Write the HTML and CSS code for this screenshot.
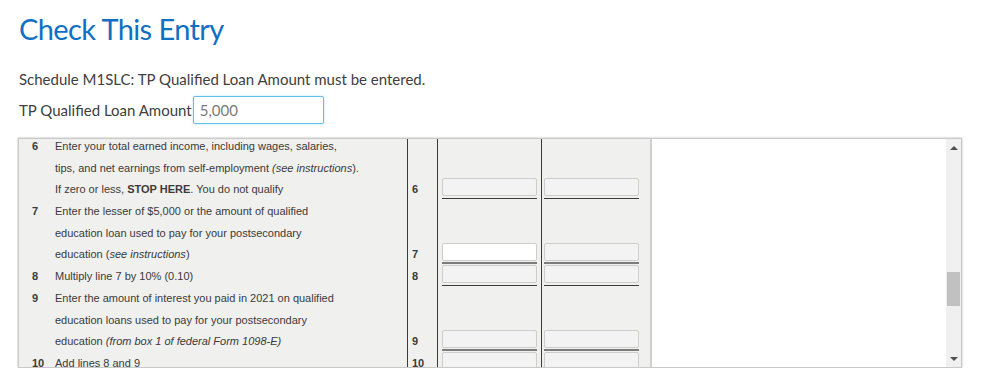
FILE: index.html
```html
<!DOCTYPE html>
<html lang="en">
<head>
<meta charset="UTF-8" />
<meta name="viewport" content="width=device-width, initial-scale=1" />
<title>Check This Entry</title>
<link rel="stylesheet" href="styles.css">
</head>
<body>
<main>
  <h1 class="title">Check This Entry</h1>
  <p class="message">Schedule M1SLC: TP Qualified Loan Amount must be entered.</p>
  <div class="entry">
    <label for="loan-amount">TP Qualified Loan Amount</label>
    <input type="text" id="loan-amount" class="entry-input" value="5,000" />
  </div>

  <section class="frame">
    <div class="form-view">
      <div class="form-content">
        <div class="row">
          <span class="num">6</span>
          <span class="desc">Enter your total earned income, including wages, salaries,</span>
          <span class="line"></span><span class="amt"></span><span class="amt amt-b"></span>
        </div>
        <div class="row">
          <span class="num"></span>
          <span class="desc">tips, and net earnings from self-employment <i>(see instructions</i>).</span>
          <span class="line"></span><span class="amt"></span><span class="amt amt-b"></span>
        </div>
        <div class="row">
          <span class="num"></span>
          <span class="desc">If zero or less, <b>STOP HERE</b>. You do not qualify</span>
          <span class="line">6</span>
          <span class="amt"><span class="box"></span><span class="rule"></span></span>
          <span class="amt amt-b"><span class="box"></span><span class="rule"></span></span>
        </div>
        <div class="row">
          <span class="num">7</span>
          <span class="desc">Enter the lesser of $5,000 or the amount of qualified</span>
          <span class="line"></span><span class="amt"></span><span class="amt amt-b"></span>
        </div>
        <div class="row">
          <span class="num"></span>
          <span class="desc">education loan used to pay for your postsecondary</span>
          <span class="line"></span><span class="amt"></span><span class="amt amt-b"></span>
        </div>
        <div class="row">
          <span class="num"></span>
          <span class="desc">education (<i>see instructions</i>)</span>
          <span class="line">7</span>
          <span class="amt"><span class="box box-open"></span><span class="rule rule-double"></span></span>
          <span class="amt amt-b"><span class="box"></span><span class="rule rule-double"></span></span>
        </div>
        <div class="row">
          <span class="num">8</span>
          <span class="desc">Multiply line 7 by 10% (0.10)</span>
          <span class="line">8</span>
          <span class="amt"><span class="box"></span><span class="rule"></span></span>
          <span class="amt amt-b"><span class="box"></span><span class="rule"></span></span>
        </div>
        <div class="row">
          <span class="num">9</span>
          <span class="desc">Enter the amount of interest you paid in 2021 on qualified</span>
          <span class="line"></span><span class="amt"></span><span class="amt amt-b"></span>
        </div>
        <div class="row">
          <span class="num"></span>
          <span class="desc">education loans used to pay for your postsecondary</span>
          <span class="line"></span><span class="amt"></span><span class="amt amt-b"></span>
        </div>
        <div class="row">
          <span class="num"></span>
          <span class="desc">education <i>(from box 1 of federal Form 1098-E)</i></span>
          <span class="line">9</span>
          <span class="amt"><span class="box"></span><span class="rule rule-double"></span></span>
          <span class="amt amt-b"><span class="box"></span><span class="rule rule-double"></span></span>
        </div>
        <div class="row">
          <span class="num">10</span>
          <span class="desc">Add lines 8 and 9</span>
          <span class="line">10</span>
          <span class="amt"><span class="box"></span><span class="rule"></span></span>
          <span class="amt amt-b"><span class="box"></span><span class="rule"></span></span>
        </div>
      </div>
    </div>
    <div class="blank"></div>
    <div class="scrollbar" aria-hidden="true">
      <span class="arrow arrow-up"></span>
      <div class="track"><span class="thumb"></span></div>
      <span class="arrow arrow-down"></span>
    </div>
  </section>
</main>
</body>
</html>
```

FILE: styles.css
```css
/* Reset and base */
*, *::before, *::after {
  box-sizing: border-box;
}
body {
  margin: 0;
  font-family: Lato, 'Open Sans', sans-serif;
  background: white;
  color: #404040;
}
main {
  padding: 0 36px 0 18px;
}
/* Header area */
.title {
  margin: 0;
  padding: 11px 0 0 1px;
  font-size: 29px;
  line-height: 36px;
  font-weight: 400;
  letter-spacing: -0.6px;
  color: #0f70c4;
}
.message {
  margin: 22px 0 0 1px;
  font-size: 15px;
  line-height: 20px;
}
.entry {
  display: flex;
  align-items: center;
  margin: 7px 0 0 1px;
  font-size: 15px;
}
.entry label {
  white-space: nowrap;
}
.entry-input {
  width: 131px;
  height: 28px;
  margin-left: 1px;
  padding: 0 6px;
  border: 1px solid #5fc0ee;
  border-radius: 2px;
  box-shadow: 0 0 2px rgb(95 192 238 / 0.6);
  font: inherit;
  font-size: 15px;
  color: #7a7a7a;
  outline: none;
}
/* Embedded form frame */
.frame {
  display: flex;
  height: 230px;
  margin-top: 14px;
  border: 1px solid #c9c9c9;
  box-shadow: 0 0 2px rgb(0 0 0 / 0.3);
  background: white;
}
.form-view {
  width: 633px;
  background: #f0f0ef;
  border-right: 2px solid #cfcfcf;
  overflow: hidden;
  font-family: 'Liberation Sans', Arial, sans-serif;
  font-size: 11px;
  color: #3a3a3a;
}
.form-content {
  margin-top: -3px;
}
.row {
  display: flex;
  height: 21.7px;
  line-height: 21.7px;
}
.num {
  width: 36px;
  padding-left: 13px;
  font-weight: 700;
}
.desc {
  width: 352px;
  white-space: nowrap;
}
.line {
  width: 31px;
  padding-left: 4px;
  border-left: 1px solid #3a3a3a;
  border-right: 1px solid #3a3a3a;
  font-weight: 700;
}
.amt {
  display: flex;
  flex-direction: column;
  width: 104px;
  padding: 0 4px;
  border-right: 1px solid #3a3a3a;
}
.amt-b {
  width: 108px;
  padding: 0 11px 0 2px;
  border-right: none;
}
.box {
  display: block;
  height: 18px;
  margin-top: -1px;
  background: #f3f3f3;
  border: 1px solid #cdcdcd;
  border-radius: 2px;
}
.box-open {
  background: white;
}
.rule {
  display: block;
  margin-top: 2px;
  border-top: 1px solid #3a3a3a;
}
.rule-double {
  margin-top: 1px;
  border-top: 2px solid #7c7c7c;
}
.blank {
  flex: 1;
}
/* Scrollbar */
.scrollbar {
  width: 15px;
  display: flex;
  flex-direction: column;
  background: #f0f0f0;
}
.arrow {
  height: 17px;
  display: flex;
  align-items: center;
  justify-content: center;
}
.arrow::before {
  content: '';
  border-left: 4px solid transparent;
  border-right: 4px solid transparent;
}
.arrow-up::before {
  border-bottom: 4px solid #505050;
}
.arrow-down::before {
  border-top: 4px solid #505050;
}
.track {
  flex: 1;
  padding: 116px 1px 0;
}
.thumb {
  display: block;
  height: 34px;
  background: #c1c1c1;
}
```
